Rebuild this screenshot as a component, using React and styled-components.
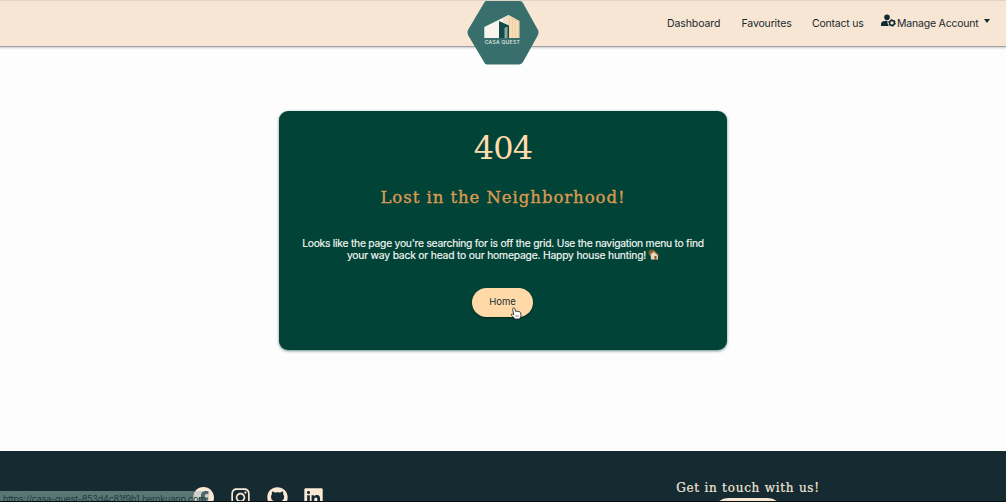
import React from "react";
import styled, { createGlobalStyle } from "styled-components";
import { FaFacebook, FaInstagram, FaGithub, FaLinkedin } from "react-icons/fa6";

const GlobalStyle = createGlobalStyle`
  * { box-sizing: border-box; }
  body { margin: 0; background: #fdfdfd; }
`;

const Page = styled.div`
  display: flex;
  flex-direction: column;
  position: relative;
  width: 100%;
  height: 502px;
  overflow: hidden;
  background: #fdfdfd;
  font-family: Inter, "Liberation Sans", sans-serif;
  white-space: nowrap;
`;

const Header = styled.header`
  position: relative;
  display: flex;
  justify-content: flex-end;
  flex: 0 0 47px;
  padding: 0 16px 0 0;
  background: #f7e6d3;
  border-top: 1px solid #dfd4c8;
  border-bottom: 1px solid #a5a2a3;
  box-shadow: 0 1px 2px rgba(20, 40, 50, 0.25);
`;

const Logo = styled.svg`
  position: absolute;
  top: -1px;
  left: 467px;
  width: 72px;
  height: 66px;
`;

const Nav = styled.nav`
  display: flex;
  height: 44px;
  align-items: center;
`;

const NavLink = styled.a`
  display: flex;
  align-items: center;
  width: ${(p) => p.$width}px;
  margin-right: ${(p) => p.$gap || 0}px;
  color: #17292f;
  font-size: 10.5px;
  letter-spacing: ${(p) => p.$spacing || 0}px;
`;

const AccountIcon = styled.svg`
  flex: none;
  width: 15px;
  height: 13px;
  margin: -5px 1px 0 0;
  color: #122b31;
`;

const Caret = styled.span`
  margin: -5px 0 0 auto;
  border: 3.5px solid transparent;
  border-top: 4px solid #17292f;
  border-bottom: 0;
`;

const Main = styled.main`
  display: flex;
  justify-content: center;
  flex: 0 0 404px;
  padding-top: 63.5px;
`;

const Card = styled.section`
  display: flex;
  flex-direction: column;
  align-items: center;
  width: 448px;
  height: 239px;
  border-radius: 9px;
  background: #024337;
  box-shadow: 0 1px 3px rgba(2, 67, 55, 0.6);
  text-align: center;
`;

const Code = styled.h1`
  margin: 17px 0 0;
  color: #ffdcae;
  font: 400 32px/40px "DejaVu Serif", serif;
  letter-spacing: -0.8px;
`;

const Title = styled.h2`
  margin: 17px 0 0;
  color: #dc9a51;
  font: 400 16.5px/26px "DejaVu Serif", serif;
  letter-spacing: 0.95px;
  -webkit-text-stroke: 0.35px #dc9a51;
`;

const Message = styled.p`
  margin: 26px 0 0;
  color: #f4f8f4;
  font-size: 10.3px;
  line-height: 12px;
`;

const Line = styled.span`
  display: flex;
  justify-content: center;
  align-items: center;
  letter-spacing: ${(p) => p.$spacing}px;
  -webkit-text-stroke: 0.15px #f4f8f4;
`;

const House = styled.svg`
  width: 11px;
  height: 11px;
  margin-left: 2px;
`;

const HomeButton = styled.button`
  position: relative;
  width: 61px;
  height: 29px;
  margin: 27px 1px 0 0;
  padding: 0 0 1px;
  border: 0;
  border-radius: 15px;
  background: #ffd9a7;
  box-shadow: 0 1px 2px rgba(0, 20, 10, 0.6);
  color: #1c3034;
  font: 9.5px Inter, sans-serif;
`;

const Pointer = styled.svg`
  position: absolute;
  left: 38px;
  top: 19px;
  width: 12px;
  height: 13px;
`;

const Footer = styled.footer`
  display: flex;
  justify-content: space-between;
  flex: 0 0 51px;
  padding: 0 183px 0 193px;
  background: #162b31;
  border-bottom: 1px solid #080d10;
  overflow: hidden;
`;

const Socials = styled.div`
  display: flex;
  gap: 15.8px;
  padding-top: 36px;
  color: #fce9d5;

  svg { width: 21px; height: 21px; flex: none; }
`;

const Contact = styled.div`
  display: flex;
  flex-direction: column;
  align-items: center;
  width: 150px;
  padding-top: 28px;
`;

const ContactTitle = styled.h3`
  margin: 0;
  color: #f1e5d8;
  font: 400 12px/18px "DejaVu Serif", serif;
  letter-spacing: 0.75px;
  -webkit-text-stroke: 0.2px #f1e5d8;
`;

const ContactButton = styled.button`
  flex: none;
  width: 68px;
  height: 28px;
  margin-top: 1px;
  border: 0;
  border-radius: 14px;
  background: #f7e6d3;
`;

const StatusBar = styled.div`
  position: absolute;
  left: 0;
  bottom: 1px;
  width: 209px;
  height: 10px;
  padding-left: 3px;
  overflow: hidden;
  background: linear-gradient(90deg, #5b7775 92%, rgba(150, 175, 180, 0.45) 93%);
  color: #1b3940;
  font: 9px/15px Inter, sans-serif;
  letter-spacing: -0.19px;
`;

function LogoMark() {
  return (
    <Logo viewBox="0 0 72 66">
      <path d="M19 1H53Q55 1 56 3L71 30Q72 32 71 35L56 62Q54 64.5 52 64.5H20Q18 64.5 17 62L1 35Q0 32 1 30L17 3Q18 1 19 1Z" fill="#386f6c" />
      <path d="M17.3 38V27L41.5 15 52.3 21V38Z" fill="#f8f5ed" />
      <path d="M36 18L41.5 15.3V25L36 22Z" fill="#efe0ca" />
      <path d="M41.5 15.3L52.3 21V38H41.5Z" fill="#f1d1a4" />
      <path d="M44 18V38M47 20V38M50 21V38" stroke="#fff0d7" strokeWidth=".8" />
      <path d="M32 38V21L42 25.5V38Z" fill="#124b4a" />
      <path d="M37.5 38V28L40.5 26.5V38Z" fill="#91a49e" />
      <text x="35.2" y="43.7" textAnchor="middle" textLength="35" fill="#e2ebe4" fontFamily="Inter, sans-serif" fontSize="5" fontWeight="500">CASA QUEST</text>
    </Logo>
  );
}

function UserGear() {
  return (
    <AccountIcon viewBox="0 0 15 13" fill="currentColor">
      <circle cx="6" cy="3.2" r="2.8" />
      <path d="M0 12V9.7Q0 7.8 2 7.2Q4 6.6 6.6 6.8Q5.8 9.6 7.6 12Z" />
      <circle cx="11" cy="8.9" r="2.4" fill="none" stroke="currentColor" strokeWidth="1.5" />
      <circle cx="11" cy="8.9" r="3.4" fill="none" stroke="currentColor" strokeWidth="1" strokeDasharray="1.78 1.78" />
    </AccountIcon>
  );
}

export default function App() {
  return (
    <>
      <GlobalStyle />
      <Page>
        <Header>
          <LogoMark />
          <Nav>
            <NavLink $width={53} $gap={21.5} $spacing={-0.1}>Dashboard</NavLink>
            <NavLink $width={50} $gap={20.5} $spacing={-0.15}>Favourites</NavLink>
            <NavLink $width={52} $gap={17} $spacing={-0.2}>Contact us</NavLink>
            <NavLink $width={109} $spacing={-0.2}><UserGear />Manage Account<Caret /></NavLink>
          </Nav>
        </Header>
        <Main>
          <Card>
            <Code>404</Code>
            <Title>Lost in the Neighborhood!</Title>
            <Message>
              <Line $spacing={-0.24}>Looks like the page you're searching for is off the grid. Use the navigation menu to find</Line>
              <Line $spacing={-0.18}>
                your way back or head to our homepage. Happy house hunting!
                <House viewBox="0 0 11 11">
                  <circle cx="3.5" cy="3.6" r="3" fill="#75602d" />
                  <path d="M2.5 5L6 2.5 10 6V10.5H3Z" fill="#ead8b9" />
                  <path d="M1.5 5.5L5.8 1.8 10.5 6.5" fill="none" stroke="#a16a3c" strokeWidth="1.2" />
                  <path d="M6.5 7H8.5V10.5H6.5Z" fill="#80512f" />
                </House>
              </Line>
            </Message>
            <HomeButton>
              Home
              <Pointer viewBox="0 0 12 13">
                <path d="M3 1.2Q4 .2 4.8 1.5L5.6 4.4 7 4 8 4.6 9 4.4 10.7 5.8 11 9 9.6 12H5.3L1.4 8.3Q1 7 2.3 7L3.8 7.8 2.6 2.2Z" fill="#fff" stroke="#17201f" strokeWidth=".8" />
                <path d="M6.2 8V10M8 8V10" stroke="#444" strokeWidth=".6" />
              </Pointer>
            </HomeButton>
          </Card>
        </Main>
        <Footer>
          <Socials><FaFacebook /><FaInstagram /><FaGithub /><FaLinkedin /></Socials>
          <Contact>
            <ContactTitle>Get in touch with us!</ContactTitle>
            <ContactButton aria-label="Contact" />
          </Contact>
        </Footer>
        <StatusBar>https://casa-quest-853d4c81f9b1.herokuapp.com</StatusBar>
      </Page>
    </>
  );
}
